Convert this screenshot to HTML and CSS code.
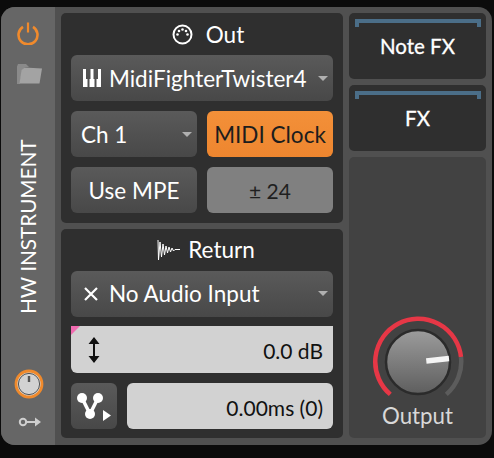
FILE: index.html
```html
<!DOCTYPE html>
<html lang="en">
<head>
    <meta charset="UTF-8">
    <title>HW Instrument</title>
    <link rel="stylesheet" href="styles.css">
</head>
<body>
    <div class="device">
        <div class="rail">
            <svg class="rail-power" width="24" height="24" viewBox="0 0 24 24">
                <path d="M7 5.800a9.500 9.500 0 1 0 10 0" fill="none" stroke="#f08a2c" stroke-width="2.600"/>
                <path d="M12 1.500v10" fill="none" stroke="#f08a2c" stroke-width="2.200"/>
            </svg>
            <svg class="rail-folder" width="28" height="22" viewBox="0 0 28 22">
                <path d="M1 3.500 2 1h8l3 3h-4l-3 3-2 14H1z" fill="#8a8a8a"/>
                <path d="M8.500 4.500 26 5.500 23.500 20.500H3.500L5.500 7z" fill="#a3a3a3"/>
            </svg>
            <div class="rail-title">HW INSTRUMENT</div>
            <svg class="rail-knob" width="30" height="30" viewBox="0 0 30 30">
                <circle cx="15" cy="15" r="13" fill="#d2d2d2" stroke="#f08a2c" stroke-width="2.800"/>
                <circle cx="15" cy="15" r="10.600" fill="none" stroke="#555" stroke-width="1"/>
                <path d="M15 7v6" stroke="#555" stroke-width="2.400"/>
            </svg>
            <svg class="rail-key" width="24" height="12" viewBox="0 0 24 12">
                <circle cx="5" cy="6" r="3.200" fill="none" stroke="#cfcfcf" stroke-width="2"/>
                <path d="M8 6h12" stroke="#cfcfcf" stroke-width="2"/>
                <path d="M17 1.500 23 6l-6 4.500z" fill="#cfcfcf"/>
            </svg>
        </div>

        <div class="middle">
            <div class="panel">
                <div class="panel-title title-out">
                    <svg width="21" height="21" viewBox="0 0 21 21">
                        <circle cx="10.500" cy="10.500" r="9" fill="none" stroke="#fff" stroke-width="2"/>
                        <g fill="#fff">
                            <circle cx="5.500" cy="10.500" r="1.300"/>
                            <circle cx="7" cy="7" r="1.300"/>
                            <circle cx="10.500" cy="5.500" r="1.300"/>
                            <circle cx="14" cy="7" r="1.300"/>
                            <circle cx="15.500" cy="10.500" r="1.300"/>
                        </g>
                    </svg>
                    <span>Out</span>
                </div>
                <div class="btn select">
                    <svg class="select-icon" width="18" height="18" viewBox="0 0 18 18">
                        <path d="M0 0h3v10h1.500v8H0zM7.500 0h3v10h1v8h-5v-8h1zM15 0h3v18h-4.500v-8H15z" fill="#fff"/>
                    </svg>
                    <span class="select-text">MidiFighterTwister4</span>
                    <i class="arrow"></i>
                </div>
                <div class="row">
                    <div class="btn select ch">
                        <span class="select-text">Ch 1</span>
                        <i class="arrow"></i>
                    </div>
                    <div class="btn orange">MIDI Clock</div>
                </div>
                <div class="row">
                    <div class="btn">Use MPE</div>
                    <div class="btn grey">± 24</div>
                </div>
            </div>

            <div class="panel">
                <div class="panel-title title-return">
                    <svg width="23" height="22" viewBox="0 0 23 22">
                        <path d="M1 1 1.500 21 3 3 4.500 18 6 5 7.500 16 9 7 10.500 14 12 8 13.500 13 15 9 16.500 12 18 10.500H23" fill="none" stroke="#fff" stroke-width="1"/>
                    </svg>
                    <span>Return</span>
                </div>
                <div class="btn select">
                    <svg class="select-icon x-icon" width="14" height="14" viewBox="0 0 14 14">
                        <path d="M1 1l12 12M13 1 1 13" stroke="#fff" stroke-width="2.200"/>
                    </svg>
                    <span class="select-text">No Audio Input</span>
                    <i class="arrow"></i>
                </div>
                <div class="level">
                    <i class="level-flag"></i>
                    <svg width="12" height="26" viewBox="0 0 12 26">
                        <path d="M6 0 11.500 7H.5zM6 26 .5 19h11zM5 5h2v16H5z" fill="#111"/>
                    </svg>
                    <span>0.0 dB</span>
                </div>
                <div class="row">
                    <div class="btn square">
                        <svg width="36" height="32" viewBox="0 0 36 32">
                            <path d="M5 8l8 16M21 8l-8 16" stroke="#fff" stroke-width="3.500"/>
                            <circle cx="5" cy="8" r="5" fill="#fff"/>
                            <circle cx="21" cy="8" r="5" fill="#fff"/>
                            <circle cx="13" cy="24" r="5" fill="#fff"/>
                            <path d="M26 20l8 5.500-8 5.500z" fill="#fff"/>
                        </svg>
                    </div>
                    <div class="delay">0.00ms (0)</div>
                </div>
            </div>
        </div>

        <div class="side">
            <div class="fx-box"><i class="fx-bracket"></i><span>Note FX</span></div>
            <div class="fx-box"><i class="fx-bracket"></i><span>FX</span></div>
            <div class="output">
                <svg width="92" height="82" viewBox="0 0 92 82">
                    <defs>
                        <linearGradient id="knob" x1="0" y1="0" x2="0" y2="1">
                            <stop offset="0" stop-color="#9c9c9c"/>
                            <stop offset="1" stop-color="#5e5e5e"/>
                        </linearGradient>
                    </defs>
                    <path d="M18.300 78.400A43 43 0 1 1 89 41" fill="none" stroke="#e63746" stroke-width="4.500"/>
                    <path d="M89 41A43 43 0 0 1 74.300 78.400" fill="none" stroke="#5c5c5c" stroke-width="4.500"/>
                    <circle cx="46" cy="46" r="32" fill="url(#knob)" stroke="#2b2b2b" stroke-width="2.500"/>
                    <path d="M54.300 45 77 42.600" stroke="#f4f4f4" stroke-width="5.500"/>
                </svg>
                <div class="output-label">Output</div>
            </div>
        </div>
    </div>
</body>
</html>
```

FILE: styles.css
```css
body {
    margin: 0;
    width: 494px;
    height: 458px;
    background: #0b0b0b;
    font-family: Lato, "Open Sans", sans-serif;
    color: white;
    overflow: hidden;
}
.device {
    display: flex;
    width: 491px;
    height: 438px;
    margin: 7px 0 0 1px;
    background: #505050;
    border-radius: 14px;
    overflow: hidden;
}
.rail {
    display: flex;
    flex-direction: column;
    align-items: center;
    width: 54px;
    height: 100%;
    background: #666;
    box-sizing: border-box;
}
.rail-power {
    margin-top: 14px;
}
.rail-folder {
    margin-top: 18px;
    margin-left: 3px;
}
.rail-title {
    writing-mode: vertical-rl;
    transform: rotate(180deg);
    height: 175px;
    margin-top: 54px;
    font-size: 20.700px;
    line-height: 26px;
    text-align: center;
    white-space: nowrap;
}
.rail-knob {
    margin-top: 55px;
    margin-left: 2px;
}
.rail-key {
    margin-top: 17px;
    margin-left: 3px;
}
.middle {
    display: flex;
    flex-direction: column;
    gap: 6px;
    width: 282px;
    margin: 6px 0 7px 6px;
}
.panel {
    flex: 1;
    display: flex;
    flex-direction: column;
    gap: 10px;
    padding: 0 10px;
    background: #2f2f2f;
    border-radius: 5px;
}
.panel-title {
    display: flex;
    align-items: center;
    justify-content: center;
    gap: 8px;
    height: 42px;
    margin-bottom: -10px;
    font-size: 22.500px;
}
.title-out {
    gap: 13px;
    padding-left: 12px;
}
.title-return {
    padding-left: 8px;
}
.btn {
    display: flex;
    align-items: center;
    justify-content: center;
    height: 46px;
    box-sizing: border-box;
    background: linear-gradient(#5a5a5a, #484848);
    border-radius: 6px;
    font-size: 22.500px;
}
.select {
    justify-content: flex-start;
    padding-left: 12px;
}
.select-icon {
    margin-right: 8px;
}
.x-icon {
    margin-left: 1px;
    margin-right: 11px;
}
.select-text {
    flex: 1;
    white-space: nowrap;
}
.arrow {
    width: 0;
    height: 0;
    margin-right: 5px;
    border-left: 5px solid transparent;
    border-right: 5px solid transparent;
    border-top: 5px solid #b0b0b0;
}
.row {
    display: flex;
    gap: 10px;
}
.row .btn {
    flex: 0 0 126px;
}
.row .ch {
    padding-left: 10px;
}
.row .square {
    flex: 0 0 46px;
    padding-left: 2px;
}
.orange {
    background: linear-gradient(#f39039, #ee862f);
    color: #1d1d1d;
}
.grey {
    background: #808080;
    color: #1f1f1f;
    font-size: 21px;
}
.level {
    position: relative;
    display: flex;
    align-items: center;
    justify-content: space-between;
    height: 47px;
    box-sizing: border-box;
    margin-top: -1px;
    padding: 2px 10px 0 17px;
    background: #d2d2d2;
    border-radius: 0 0 6px 6px;
    color: #111;
    font-size: 21px;
}
.level-flag {
    position: absolute;
    top: 0;
    left: 0;
    width: 0;
    height: 0;
    border-top: 9px solid #f06bb0;
    border-right: 9px solid transparent;
}
.delay {
    flex: 1;
    height: 46px;
    padding-right: 10px;
    background: #d2d2d2;
    border-radius: 6px;
    color: #111;
    font-size: 21px;
    line-height: 50px;
    text-align: right;
}
.side {
    display: flex;
    flex-direction: column;
    gap: 6px;
    width: 137px;
    margin: 6px 0 7px 6px;
}
.fx-box {
    position: relative;
    display: flex;
    align-items: center;
    justify-content: center;
    height: 66px;
    box-sizing: border-box;
    background: #2f2f2f;
    border-radius: 5px;
    font-size: 20.500px;
    -webkit-text-stroke: 0.3px white;
}
.fx-bracket {
    position: absolute;
    top: 6px;
    left: 6px;
    right: 5px;
    height: 4px;
    border: solid #4b6e88;
    border-width: 4px 4px 0;
}
.output {
    flex: 1;
    display: flex;
    flex-direction: column;
    align-items: center;
    justify-content: flex-end;
    padding-bottom: 9px;
    background: #424242;
    border-radius: 5px;
}
.output-label {
    margin-top: 4px;
    color: #d8d8d8;
    font-size: 22.300px;
    line-height: 27px;
}
```
